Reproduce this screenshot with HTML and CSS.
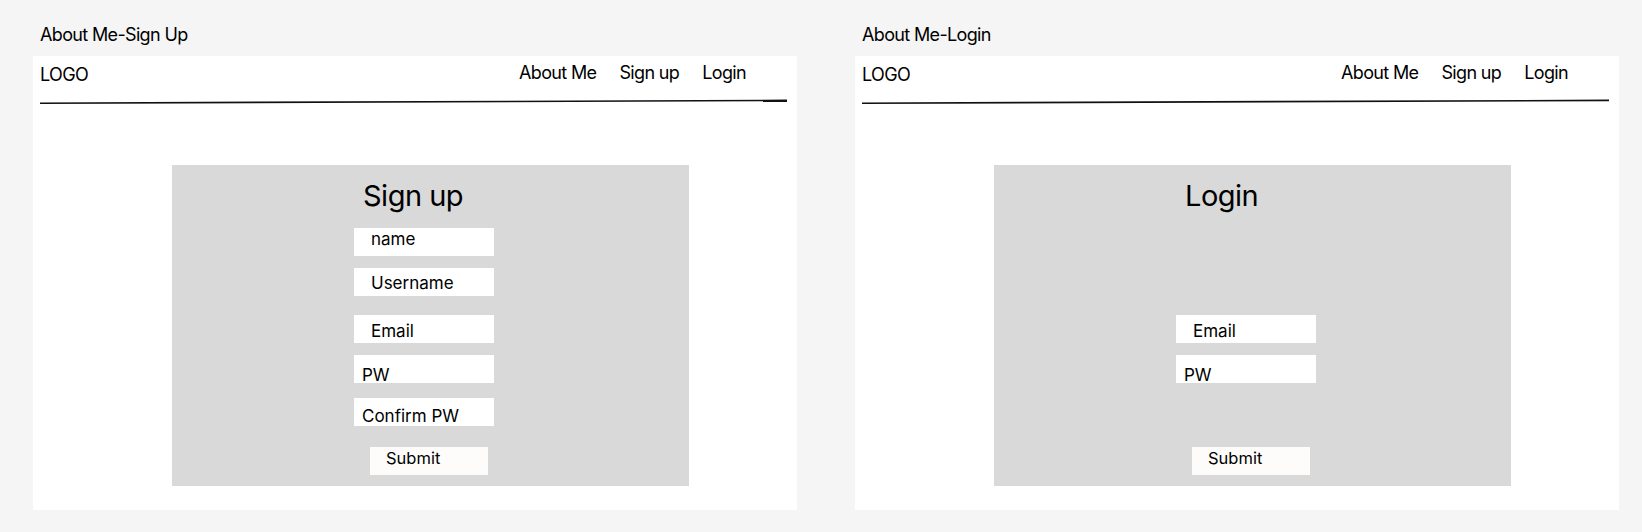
FILE: index.html
```html
<!DOCTYPE html>
<html lang="en">
<head>
<meta charset="utf-8">
<title>About Me wireframes</title>
<link rel="stylesheet" href="styles.css">
</head>
<body>
<div class="canvas">
  <section class="board">
    <div class="board-label">About Me-Sign Up</div>
    <div class="frame">
      <header class="header">
        <div class="logo">LOGO</div>
        <nav class="nav">
          <span>About Me</span>
          <span>Sign up</span>
          <span>Login</span>
        </nav>
      </header>
      <svg class="rule" width="748" height="6" viewBox="0 0 748 6"><line x1="0" y1="4.2" x2="747" y2="1.4" stroke="#111" stroke-width="1.6"/></svg>
      <div class="card">
        <h1 class="card-title">Sign up</h1>
        <div class="field f-name">name</div>
        <div class="field f-user">Username</div>
        <div class="field f-email">Email</div>
        <div class="field f-pw">PW</div>
        <div class="field f-cpw">Confirm PW</div>
        <div class="submit s-signup">Submit</div>
      </div>
    </div>
  </section>
  <section class="board">
    <div class="board-label">About Me-Login</div>
    <div class="frame">
      <header class="header">
        <div class="logo">LOGO</div>
        <nav class="nav">
          <span>About Me</span>
          <span>Sign up</span>
          <span>Login</span>
        </nav>
      </header>
      <svg class="rule" width="748" height="6" viewBox="0 0 748 6"><line x1="0" y1="4.2" x2="747" y2="1.4" stroke="#111" stroke-width="1.6"/></svg>
      <div class="card">
        <h1 class="card-title">Login</h1>
        <div class="field f-email login-email">Email</div>
        <div class="field f-pw">PW</div>
        <div class="submit s-login">Submit</div>
      </div>
    </div>
  </section>
</div>
</body>
</html>
```

FILE: styles.css
```css
* { box-sizing: border-box; }
html, body {
  margin: 0;
  padding: 0;
  background: #f5f5f5;
}
body {
  font-family: Inter, "Noto Sans", sans-serif;
  color: #000;
  width: 1642px;
  height: 532px;
  overflow: hidden;
}
.canvas {
  display: flex;
  gap: 58px;
  padding: 24px 0 0 33px;
}
.board {
  display: flex;
  flex-direction: column;
}
.board-label {
  font-size: 18px;
  line-height: 22px;
  letter-spacing: -0.65px;
  padding-left: 7px;
  margin-bottom: 10px;
}
.frame {
  width: 764px;
  height: 454px;
  background: #fff;
  display: flex;
  flex-direction: column;
}
.header {
  display: flex;
  justify-content: space-between;
  align-items: flex-start;
  padding: 5.5px 51px 0 7px;
  font-size: 18px;
  line-height: 22px;
  letter-spacing: -0.65px;
}
.logo { margin-top: 2px; }
.nav {
  display: flex;
  gap: 23px;
}
.rule {
  display: block;
  margin: 13.5px 0 0 7px;
}
.card {
  margin: 60px 0 0 139px;
  width: 517px;
  height: 321px;
  background: #d9d9d9;
  display: flex;
  flex-direction: column;
  align-items: flex-start;
  padding-left: 182px;
}
.card-title {
  margin: 12.5px 0 0 9px;
  font-size: 29px;
  font-weight: 400;
  line-height: 36px;
  letter-spacing: -0.5px;
}
.field {
  width: 140px;
  height: 28px;
  background: #fff;
  font-size: 17px;
  line-height: 20px;
  padding-left: 17px;
  white-space: nowrap;
}
.f-name { margin-top: 14.5px; padding-top: 1px; }
.f-user { margin-top: 12px; padding-top: 4.8px; }
.f-email { margin-top: 19px; padding-top: 6.3px; }
.f-pw { margin-top: 12px; padding-top: 9.5px; padding-left: 8px; }
.f-cpw { margin-top: 15px; padding-top: 7.8px; padding-left: 8px; }
.login-email { margin-top: 101.5px; }
.submit {
  width: 118px;
  height: 28px;
  margin-left: 16px;
  background: #fdfcfb;
  font-size: 16.5px;
  line-height: 20px;
  padding: 1px 0 0 16px;
}
.s-signup { margin-top: 21px; }
.s-login { margin-top: 64px; }
```
